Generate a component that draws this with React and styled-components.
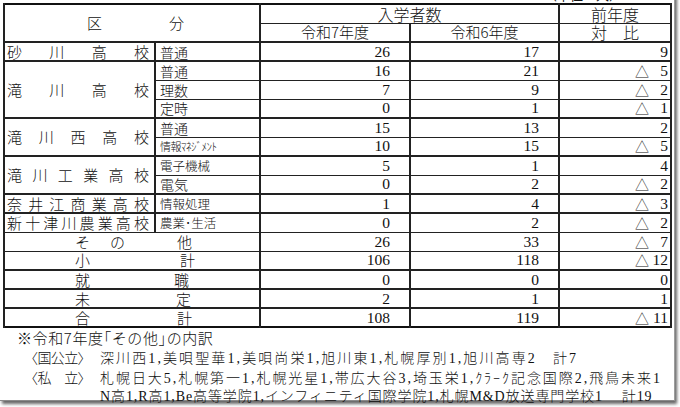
import React from "react";
import styled, { createGlobalStyle } from "styled-components";

const GlobalStyle = createGlobalStyle`
  html, body {
    margin: 0;
    padding: 0;
    background: #ffffff;
    overflow: hidden;
  }
`;

const SERIF = `"Liberation Serif", "Noto Sans CJK JP", serif`;
const GOTHIC = `"Noto Sans CJK JP", "Liberation Sans", sans-serif`;

const Page = styled.div`
  width: 680px;
  height: 407px;
  overflow: hidden;
  background: #fff;
`;

const Sheet = styled.div`
  width: 675px;
  height: 415px;
  margin-top: -14px;
  padding-left: 3px;
  box-sizing: border-box;
  border-right: 1px solid #9c9c9c;
  border-bottom: 1px solid #8a8a8a;
  box-shadow: 2px 3px 3px rgba(0, 0, 0, 0.6);
  color: #111;
`;

const Unit = styled.div`
  height: 17px;
  line-height: 17px;
  text-align: right;
  padding-right: 52px;
  font-family: ${GOTHIC};
  font-size: 13px;
`;

const Table = styled.table`
  border-collapse: collapse;
  table-layout: fixed;
  width: 667px;
  border: 2px solid #111;
`;

const Tr = styled.tr`
  height: 19px;
`;

const Cell = styled.td`
  padding: 0;
  line-height: 14px;
  border-left: 2px solid #222;
  border-right: 2px solid #222;
  border-top: ${(p) => (p.$thick ? "2px" : "1px")} solid #222;
  border-bottom: 1px solid #222;
  white-space: nowrap;
  overflow: hidden;
  font-family: ${GOTHIC};
  font-weight: 300;
  font-size: 15px;
  vertical-align: middle;
`;

const HeadCell = styled(Cell)`
  text-align: center;
  font-size: 15px;
  ${(p) => p.$big && "font-size: 16px;"}
`;

const Spread = styled.div`
  display: flex;
  justify-content: space-between;
  padding: 0 5px 0 2px;
`;

const Placed = styled.div`
  display: flex;
  align-items: center;
  padding-left: ${(p) => p.$left}px;
`;

const Char = styled.span`
  margin-left: ${(p) => p.$gap || 0}px;
`;

const Course = styled(Cell)`
  padding-left: 4px;
  font-size: ${(p) => (p.$small ? 12.5 : 14)}px;
  ${(p) => p.$tiny && "font-size: 11px; letter-spacing: -0.5px;"}
`;

const Num = styled(Cell)`
  text-align: right;
  padding-right: 19px;
  font-family: ${SERIF};
  font-weight: 400;
  font-size: 15.5px;
`;

const DeltaCell = styled(Cell)`
  text-align: right;
  padding-right: 2px;
  font-family: ${SERIF};
  font-weight: 400;
  font-size: 15.5px;
`;

const Delta = styled.span`
  display: inline-flex;
  align-items: center;
  justify-content: flex-end;
  vertical-align: top;
`;

const Tri = styled.span`
  font-family: ${GOTHIC};
  font-weight: 300;
  font-size: 14px;
  margin-right: 3px;
`;

const Digits = styled.span`
  display: inline-block;
  min-width: 16px;
  text-align: right;
`;

const Notes = styled.div`
  padding: 1px 0 0 14px;
  font-family: ${SERIF};
  color: #111;
`;

const NoteTitle = styled.div`
  font-family: ${GOTHIC};
  font-weight: 300;
  font-size: 15px;
  line-height: 18px;
  letter-spacing: 0.6px;
`;

const NoteLine = styled.div`
  display: flex;
  align-items: center;
  height: ${(p) => p.$h}px;
  padding-left: ${(p) => (p.$cont ? 83 : 7)}px;
  font-size: 14px;
  white-space: nowrap;
`;

const NoteLabel = styled.span`
  width: 76px;
  flex: none;
  font-family: ${GOTHIC};
  font-weight: 300;
  letter-spacing: -0.6px;
`;

const NoteText = styled.span`
  font-family: ${SERIF};
  letter-spacing: ${(p) => p.$ls}px;
  & .j {
    font-family: ${GOTHIC};
    font-weight: 300;
  }
`;

const schools = [
  { name: "砂川高校", rows: [["普通", 26, 17, 9]] },
  {
    name: "滝川高校",
    rows: [
      ["普通", 16, 21, -5],
      ["理数", 7, 9, -2],
      ["定時", 0, 1, -1],
    ],
  },
  {
    name: "滝川西高校",
    rows: [
      ["普通", 15, 13, 2],
      ["情報ﾏﾈｼﾞﾒﾝﾄ", 10, 15, -5, "tiny"],
    ],
  },
  {
    name: "滝川工業高校",
    rows: [
      ["電子機械", 5, 1, 4, "small"],
      ["電気", 0, 2, -2],
    ],
  },
  { name: "奈井江商業高校", rows: [["情報処理", 1, 4, -3, "small"]] },
  { name: "新十津川農業高校", rows: [["農業･生活", 0, 2, -2, "small"]] },
];

const totals = [
  { chars: [["そ", 0], ["の", 20], ["他", 52]], a: 26, b: 33, d: -7 },
  { chars: [["小", 0], ["計", 90]], a: 106, b: 118, d: -12 },
  { chars: [["就", 0], ["職", 84]], a: 0, b: 0, d: 0, thick: true },
  { chars: [["未", 0], ["定", 86]], a: 2, b: 1, d: 1, thick: true },
  { chars: [["合", 0], ["計", 87]], a: 108, b: 119, d: -11, thick: true },
];

function DeltaValue({ v }) {
  if (v >= 0) return <>{v}</>;
  return (
    <Delta>
      <Tri>△</Tri>
      <Digits>{-v}</Digits>
    </Delta>
  );
}

export default function App() {
  return (
    <Page>
      <GlobalStyle />
      <Sheet>
        <Unit>（単位：人）</Unit>
        <Table>
          <colgroup>
            <col style={{ width: 151 }} />
            <col style={{ width: 105 }} />
            <col style={{ width: 150 }} />
            <col style={{ width: 149 }} />
            <col style={{ width: 112 }} />
          </colgroup>
          <tbody>
            <Tr>
              <HeadCell colSpan={2} rowSpan={2}>
                <Placed $left={82}>
                  <Char>区</Char>
                  <Char $gap={67}>分</Char>
                </Placed>
              </HeadCell>
              <HeadCell colSpan={2} $big>入学者数</HeadCell>
              <HeadCell $big>前年度</HeadCell>
            </Tr>
            <Tr>
              <HeadCell>令和7年度</HeadCell>
              <HeadCell>令和6年度</HeadCell>
              <HeadCell $big>
                対<Char $gap={16}>比</Char>
              </HeadCell>
            </Tr>
            {schools.map((s, si) =>
              s.rows.map((r, ri) => (
                <Tr key={`${si}-${ri}`}>
                  {ri === 0 && (
                    <Cell rowSpan={s.rows.length} $thick>
                      <Spread>
                        {[...s.name].map((c, i) => (
                          <span key={i}>{c}</span>
                        ))}
                      </Spread>
                    </Cell>
                  )}
                  <Course $small={r[4] === "small"} $tiny={r[4] === "tiny"} $thick={ri === 0}>
                    {r[0]}
                  </Course>
                  <Num $thick={ri === 0}>{r[1]}</Num>
                  <Num $thick={ri === 0}>{r[2]}</Num>
                  <DeltaCell $thick={ri === 0}>
                    <DeltaValue v={r[3]} />
                  </DeltaCell>
                </Tr>
              ))
            )}
            {totals.map((t, i) => (
              <Tr key={`t${i}`}>
                <Cell colSpan={2} $thick={t.thick}>
                  <Placed $left={70}>
                    {t.chars.map(([c, g], k) => (
                      <Char key={k} $gap={g}>
                        {c}
                      </Char>
                    ))}
                  </Placed>
                </Cell>
                <Num $thick={t.thick}>{t.a}</Num>
                <Num $thick={t.thick}>{t.b}</Num>
                <DeltaCell $thick={t.thick}>
                  <DeltaValue v={t.d} />
                </DeltaCell>
              </Tr>
            ))}
          </tbody>
        </Table>
        <Notes>
          <NoteTitle>※令和7年度｢その他｣の内訳</NoteTitle>
          <NoteLine $h={19}>
            <NoteLabel>〈国公立〉</NoteLabel>
            <NoteText $ls={2.1}>
              <span className="j">深川西</span>1,<span className="j">美唄聖華</span>1,
              <span className="j">美唄尚栄</span>1,<span className="j">旭川東</span>1,
              <span className="j">札幌厚別</span>1,<span className="j">旭川高専</span>2
              <span className="j">　計</span>7
            </NoteText>
          </NoteLine>
          <NoteLine $h={21}>
            <NoteLabel>〈私　立〉</NoteLabel>
            <NoteText $ls={1.95}>
              <span className="j">札幌日大</span>5,<span className="j">札幌第一</span>1,
              <span className="j">札幌光星</span>1,<span className="j">帯広大谷</span>3,
              <span className="j">埼玉栄</span>1,<span className="j">ｸﾗｰｸ記念国際</span>2,
              <span className="j">飛鳥未来</span>1
            </NoteText>
          </NoteLine>
          <NoteLine $h={16} $cont>
            <NoteText $ls={0.9}>
              N<span className="j">高</span>1,R<span className="j">高</span>1,Be
              <span className="j">高等学院</span>1,<span className="j">インフィニティ国際学院</span>1,
              <span className="j">札幌</span>M&amp;D<span className="j">放送専門学校</span>1
              <span className="j">　 計</span>19
            </NoteText>
          </NoteLine>
        </Notes>
      </Sheet>
    </Page>
  );
}
